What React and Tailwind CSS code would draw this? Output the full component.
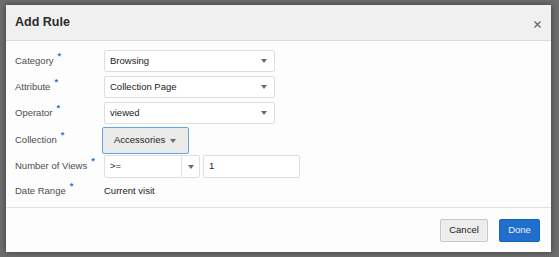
const font = { fontFamily: '"Liberation Sans", Arial, sans-serif' };

function Caret({ className = '' }) {
  return (
    <svg width="6" height="4" viewBox="0 0 6 4" className={className}>
      <polygon points="0,0 6,0 3,4" fill="#6b6b6b" />
    </svg>
  );
}

function Label({ children, className = '' }) {
  return (
    <div className={`flex items-center text-[9.5px] text-[#4d4d4d] ${className}`}>
      {children}
      <span className="relative top-[-5px] ml-[4px] text-[9px] font-bold leading-none text-[#1b76cf]">*</span>
    </div>
  );
}

function Select({ value }) {
  return (
    <div className="flex h-[22px] w-[171px] items-center justify-between rounded-[2px] border border-[#dedede] bg-white pl-[5px] pr-[7px] text-[9.5px] text-[#222]">
      <span>{value}</span>
      <Caret />
    </div>
  );
}

export default function App() {
  return (
    <div className="relative h-[257px] w-[559px] overflow-hidden bg-[#6d6d6d] pl-[6px] pt-[5px]" style={font}>
      <div className="flex h-[247px] w-[545px] flex-col bg-[#fdfdfe] shadow-[0_0_6px_rgba(0,0,0,0.45)]">
        <div className="flex h-[36px] shrink-0 items-center justify-between border-b border-[#dadbda] bg-[#eff0ef] pl-[9px] pr-[10px]">
          <h1 className="text-[12.5px] font-bold text-[#2b2b2b]">Add Rule</h1>
          <svg width="7" height="7" viewBox="0 0 7 7" className="mt-[4px]">
            <path d="M0.5 0.5 L6.5 6.5 M6.5 0.5 L0.5 6.5" stroke="#666" strokeWidth="1.3" />
          </svg>
        </div>

        <div className="grid h-[166px] shrink-0 grid-cols-[89px_1fr] content-start gap-y-[4px] pl-[9px] pt-[9px]">
          <Label>Category</Label>
          <Select value="Browsing" />

          <Label>Attribute</Label>
          <Select value="Collection Page" />

          <Label>Operator</Label>
          <Select value="viewed" />

          <Label className="-mt-[1px]">Collection</Label>
          <div className="-ml-[2px] -mt-[1px] flex h-[27px] w-[87px] items-center rounded-[2px] border border-[#62a4ec] bg-[#ebecea] pl-[11px] text-[9.5px] text-[#222]">
            <span>Accessories</span>
            <Caret className="ml-[5px]" />
          </div>

          <Label className="-mt-[3px]">Number of Views</Label>
          <div className="-mt-[3px] flex h-[23px] gap-[3px]">
            <div className="flex w-[96px] items-center rounded-[2px] border border-[#dedede] bg-white text-[9.5px] text-[#222]">
              <span className="flex-1 pl-[5px]">&gt;=</span>
              <div className="flex h-full w-[18px] items-center justify-center border-l border-[#e4e4e4]">
                <Caret />
              </div>
            </div>
            <div className="flex w-[97px] items-center rounded-[2px] border border-[#dedede] bg-white pl-[5px] text-[9.5px] text-[#222]">
              1
            </div>
          </div>

          <Label className="-mt-[2px]">Date Range</Label>
          <div className="-mt-[2px] flex h-[22px] items-center text-[9.5px] text-[#222]">Current visit</div>
        </div>

        <div className="flex flex-1 items-center justify-end gap-[11px] border-t border-[#e2e2e2] pr-[11px]">
          <button className="h-[23px] w-[48px] rounded-[2px] border border-[#c8c8c8] bg-[#ecedec] text-[9.5px] text-[#222]">
            Cancel
          </button>
          <button className="h-[23px] w-[41px] rounded-[2px] border border-[#1864bb] bg-[#1f6fcb] text-[9.5px] text-[#eef4ff]">
            Done
          </button>
        </div>
      </div>
    </div>
  );
}
